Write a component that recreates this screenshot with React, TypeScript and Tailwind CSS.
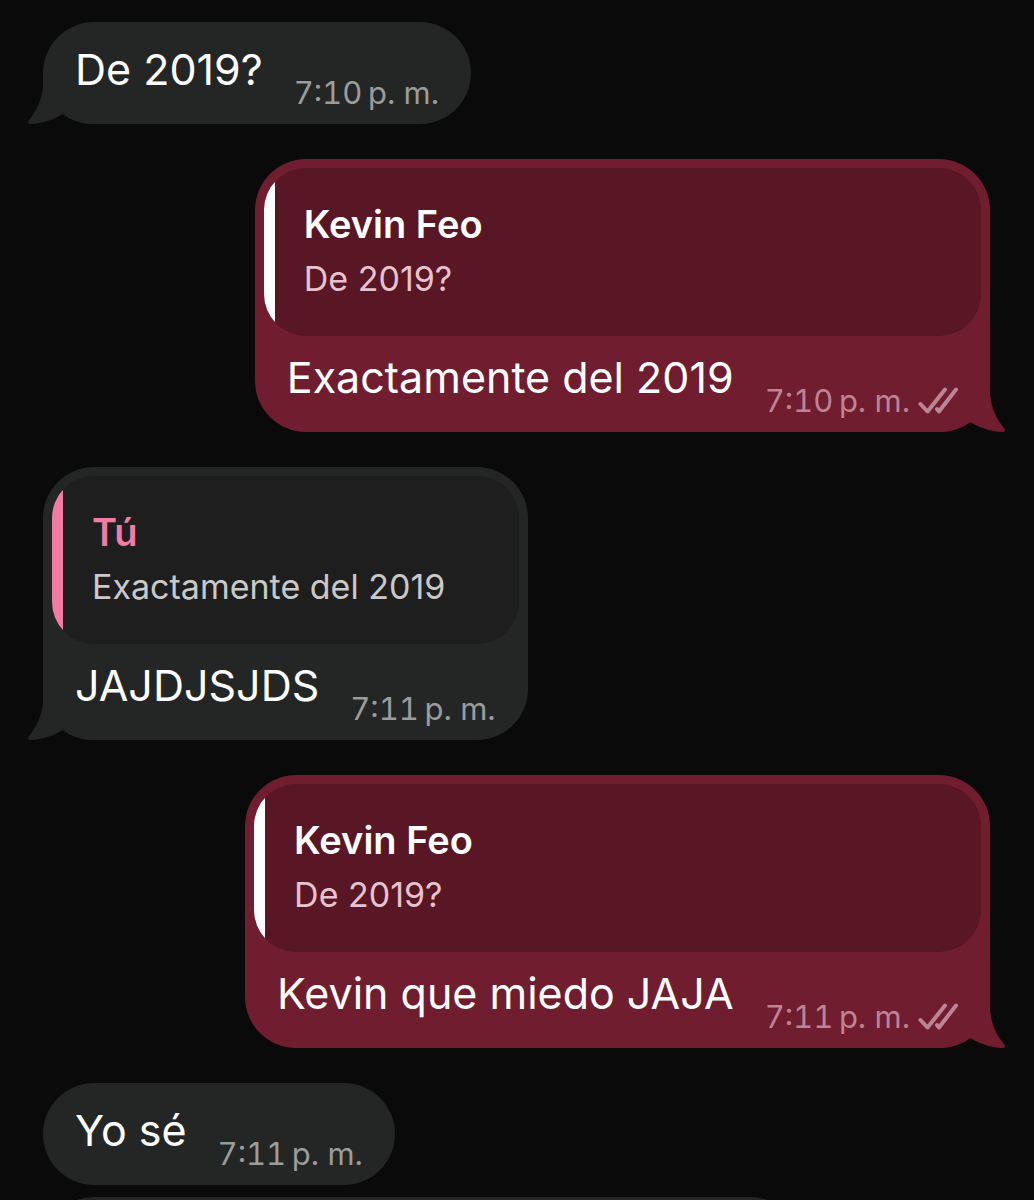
import clsx from "clsx";

interface Quote {
  author: string;
  text: string;
}

interface Message {
  id: number;
  text: string;
  time: string;
  mine?: boolean;
  tail?: boolean;
  quote?: Quote;
}

const messages: Message[] = [
  { id: 1, text: "De 2019?", time: "7:10\u2009p. m.", tail: true },
  {
    id: 2,
    text: "Exactamente del 2019",
    time: "7:10\u2009p. m.",
    mine: true,
    tail: true,
    quote: { author: "Kevin Feo", text: "De 2019?" },
  },
  {
    id: 3,
    text: "JAJDJSJDS",
    time: "7:11\u2009p. m.",
    tail: true,
    quote: { author: "Tú", text: "Exactamente del 2019" },
  },
  {
    id: 4,
    text: "Kevin que miedo JAJA",
    time: "7:11\u2009p. m.",
    mine: true,
    tail: true,
    quote: { author: "Kevin Feo", text: "De 2019?" },
  },
  { id: 5, text: "Yo sé", time: "7:11\u2009p. m." },
];

function Tail({ mine }: { mine?: boolean }) {
  return (
    <svg
      viewBox="0 0 66 51"
      className={clsx(
        "absolute bottom-0 h-[51px] w-[66px]",
        mine ? "-right-[15px] -scale-x-100 fill-[#701d2f]" : "-left-[15px] fill-[#242626]"
      )}
      aria-hidden="true"
    >
      <path d="M15 0V11C14.500 27 8 39 0.800 47.200C-0.700 49.500 0 51 3 51C14 50.500 25 47 34.500 41C42 46.500 52 51 66 51V0Z" />
    </svg>
  );
}

function DoubleCheck() {
  return (
    <svg
      viewBox="0 0 40 28"
      className="h-7 w-10 fill-none stroke-[#bd8496]"
      strokeWidth={4}
      strokeLinecap="round"
      strokeLinejoin="round"
      aria-label="Entregado"
    >
      <path d="M2.500 17L9.500 24.500L27 2.500" />
      <path d="M19 22L21 24.500L38 2.500" />
    </svg>
  );
}

function QuoteBlock({ quote, mine }: { quote: Quote; mine?: boolean }) {
  return (
    <div
      className={clsx(
        "mx-[9px] flex overflow-hidden rounded-[42px]",
        mine ? "bg-[#591624]" : "bg-[#1e1e1e]"
      )}
    >
      <div className={clsx("w-[11px] shrink-0", mine ? "bg-white" : "bg-[#f27ba3]")} />
      <div className="flex flex-col gap-2 pt-8 pr-8 pb-[34px] pl-[29px]">
        <p
          className={clsx(
            "text-[38px] leading-[48px] font-semibold",
            mine ? "text-white" : "text-[#f27ba3]"
          )}
        >
          {quote.author}
        </p>
        <p className={clsx("text-[34px] leading-[46px]", mine ? "text-[#e6c3ce]" : "text-[#c9c9c9]")}>
          {quote.text}
        </p>
      </div>
    </div>
  );
}

function Bubble({ message }: { message: Message }) {
  const { text, time, mine, tail, quote } = message;

  return (
    <li
      className={clsx(
        "relative rounded-[51px]",
        mine ? "self-end bg-[#701d2f]" : "self-start bg-[#242626]",
        quote && "pt-[9px]"
      )}
    >
      {tail && <Tail mine={mine} />}
      <div className="relative">
        {quote && <QuoteBlock quote={quote} mine={mine} />}
        <div
          className={clsx(
            "flex items-end justify-between gap-[31px] pr-8 pb-[11px] pl-8",
            quote ? "pt-[15px]" : "pt-[21px]"
          )}
        >
          <p className="pb-[18px] text-[43px] leading-[52px] text-white">{text}</p>
          <div className="flex items-center gap-2 whitespace-nowrap">
            <time
              className={clsx(
                "text-[31px] leading-10 tabular-nums",
                mine ? "text-[#bd8496]" : "text-[#9b9c9c]"
              )}
            >
              {time}
            </time>
            {mine && <DoubleCheck />}
          </div>
        </div>
      </div>
    </li>
  );
}

export default function App() {
  return (
    <main className="h-screen overflow-hidden bg-[#0a0a0a] font-['Inter',sans-serif]">
      <ul className="flex flex-col gap-[35px] pt-[22px] pr-11 pl-[43px]">
        {messages.map((message) => (
          <Bubble key={message.id} message={message} />
        ))}
        {/* next message, cut off by the bottom of the screen */}
        <li className="-mt-[23px] h-[102px] w-4/5 rounded-[51px] bg-[#242626]" />
      </ul>
    </main>
  );
}
